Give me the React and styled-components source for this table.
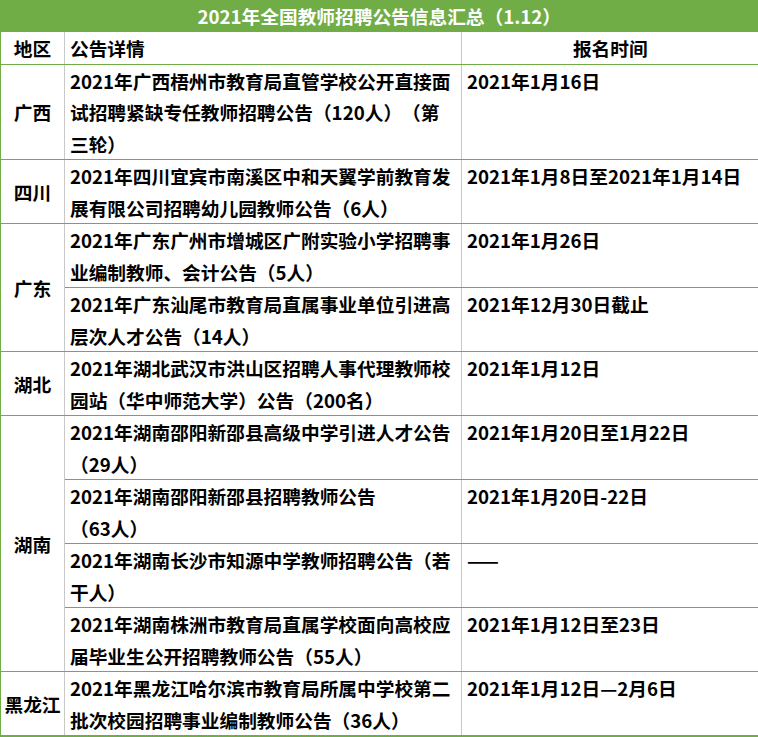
import React from 'react';
import styled, { createGlobalStyle } from 'styled-components';

const GREEN = '#70ad47';
const GRID = '#c8c8c8';

const notices = [
  {
    region: '广西',
    items: [
      {
        title: '2021年广西梧州市教育局直管学校公开直接面试招聘紧缺专任教师招聘公告（120人）（第三轮）',
        time: '2021年1月16日',
      },
    ],
  },
  {
    region: '四川',
    items: [
      {
        title: '2021年四川宜宾市南溪区中和天翼学前教育发展有限公司招聘幼儿园教师公告（6人）',
        time: '2021年1月8日至2021年1月14日',
      },
    ],
  },
  {
    region: '广东',
    items: [
      {
        title: '2021年广东广州市增城区广附实验小学招聘事业编制教师、会计公告（5人）',
        time: '2021年1月26日',
      },
      {
        title: '2021年广东汕尾市教育局直属事业单位引进高层次人才公告（14人）',
        time: '2021年12月30日截止',
      },
    ],
  },
  {
    region: '湖北',
    items: [
      {
        title: '2021年湖北武汉市洪山区招聘人事代理教师校园站（华中师范大学）公告（200名）',
        time: '2021年1月12日',
      },
    ],
  },
  {
    region: '湖南',
    items: [
      { title: '2021年湖南邵阳新邵县高级中学引进人才公告（29人）', time: '2021年1月20日至1月22日' },
      { title: '2021年湖南邵阳新邵县招聘教师公告\n（63人）', time: '2021年1月20日-22日' },
      { title: '2021年湖南长沙市知源中学教师招聘公告（若干人）', time: '——' },
      {
        title: '2021年湖南株洲市教育局直属学校面向高校应届毕业生公开招聘教师公告（55人）',
        time: '2021年1月12日至23日',
      },
    ],
  },
  {
    region: '黑龙江',
    items: [
      {
        title: '2021年黑龙江哈尔滨市教育局所属中学校第二批次校园招聘事业编制教师公告（36人）',
        time: '2021年1月12日—2月6日',
      },
    ],
  },
];

const GlobalStyle = createGlobalStyle`
  body {
    margin: 0;
    background: #fff;
  }
`;

const Table = styled.table`
  width: 758px;
  border-collapse: collapse;
  table-layout: fixed;
  font-family: "Noto Sans CJK SC", sans-serif;
  font-size: 18.7px;
  font-weight: 700;
  line-height: 31.5px;
  color: #000;
  text-spacing-trim: space-all;
`;

const Col = styled.col`
  width: ${(p) => p.$w}px;
`;

const TitleCell = styled.th`
  height: 32px;
  padding: 0;
  background: ${GREEN};
  color: #fff;
  text-align: center;
  font-weight: 700;
  border-left: 1px solid ${GREEN};
  border-right: 2px solid ${GREEN};
`;

const Cell = styled.td`
  padding: 0 4px 0 5px;
  vertical-align: top;
  white-space: pre-line;
  border-bottom: ${(p) => (p.$last ? 2 : 1)}px solid ${GREEN};
  border-left: 1px solid ${GRID};
  border-right: 1px solid ${GRID};
`;

const HeadCell = styled(Cell)`
  height: 30px;
  vertical-align: middle;
  font-weight: 700;
  text-align: ${(p) => p.$align || 'left'};
`;

const RegionCell = styled(Cell)`
  padding: 0;
  text-align: center;
  vertical-align: middle;
  border-left: 1px solid ${GREEN};
`;

const TimeCell = styled(Cell)`
  border-right: 2px solid ${GREEN};
`;

export default function App() {
  return (
    <>
      <GlobalStyle />
      <Table>
        <colgroup>
          <Col $w={64} />
          <Col $w={397} />
          <Col $w={297} />
        </colgroup>
        <thead>
          <tr>
            <TitleCell colSpan={3}>2021年全国教师招聘公告信息汇总（1.12）</TitleCell>
          </tr>
          <tr>
            <RegionCell as="th" $last={false}>地区</RegionCell>
            <HeadCell as="th">公告详情</HeadCell>
            <TimeCell as="th" style={{ textAlign: 'center', verticalAlign: 'middle' }}>
              报名时间
            </TimeCell>
          </tr>
        </thead>
        <tbody>
          {notices.map((group, g) => {
            const lastGroup = g === notices.length - 1;
            return group.items.map((item, i) => {
              const last = lastGroup && i === group.items.length - 1;
              return (
                <tr key={`${group.region}-${i}`}>
                  {i === 0 && (
                    <RegionCell rowSpan={group.items.length} $last={lastGroup}>
                      {group.region}
                    </RegionCell>
                  )}
                  <Cell $last={last}>{item.title}</Cell>
                  <TimeCell $last={last}>{item.time}</TimeCell>
                </tr>
              );
            });
          })}
        </tbody>
      </Table>
    </>
  );
}
